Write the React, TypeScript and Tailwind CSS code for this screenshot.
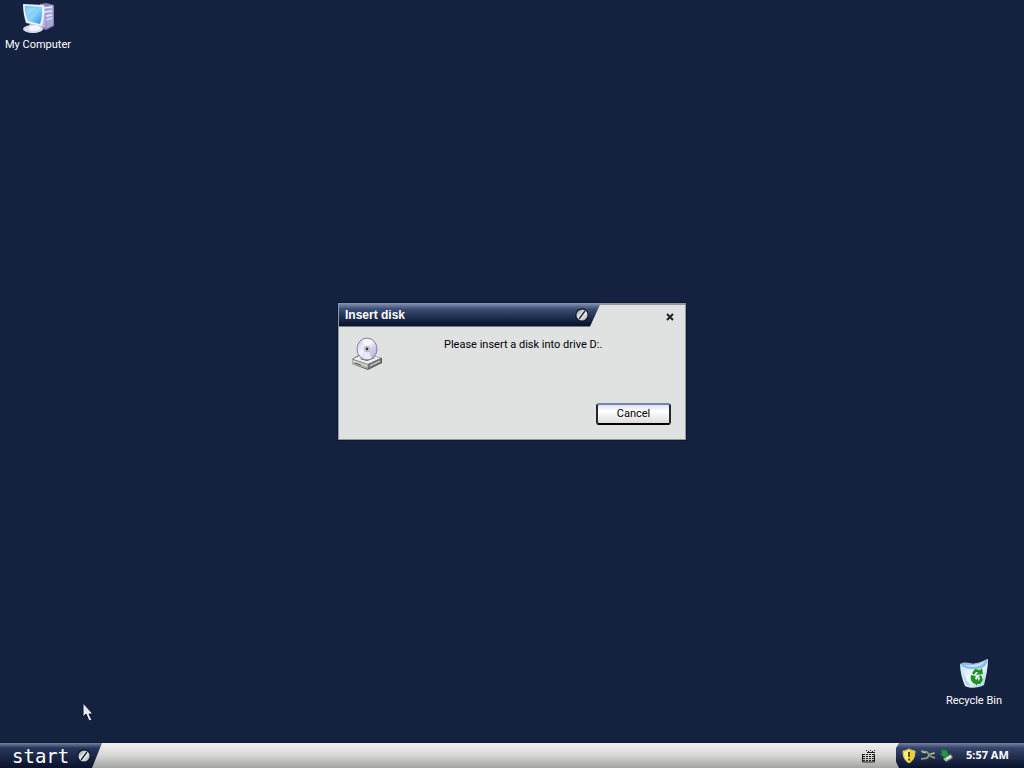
import type { ReactNode } from "react";

function Emblem() {
  return (
    <svg viewBox="0 0 14 14" className="size-3.5 shrink-0" aria-hidden="true">
      <defs>
        <linearGradient id="emblem" x1="0" y1="0" x2="1" y2="1">
          <stop offset="0" stopColor="#7c858c" />
          <stop offset="0.5" stopColor="#f4f6f6" />
          <stop offset="1" stopColor="#8f989f" />
        </linearGradient>
      </defs>
      <circle cx="7" cy="7" r="6.7" fill="#0b1226" />
      <circle cx="7" cy="7" r="5.6" fill="url(#emblem)" />
      <path d="M4 11 10 3" stroke="#141b2b" strokeWidth="1.3" />
    </svg>
  );
}

function ComputerIcon() {
  return (
    <svg viewBox="0 0 32 32" className="size-8" aria-hidden="true">
      <defs>
        <linearGradient id="screen" x1="0" y1="0" x2="1" y2="1">
          <stop offset="0" stopColor="#55b4f6" />
          <stop offset="0.5" stopColor="#8ed6fb" />
          <stop offset="1" stopColor="#2b8ce8" />
        </linearGradient>
        <linearGradient id="tower" x1="0" y1="0" x2="1" y2="0">
          <stop offset="0" stopColor="#e3e3f8" />
          <stop offset="1" stopColor="#9390c6" />
        </linearGradient>
      </defs>
      <path d="m18 2 6-1 8 2v21l-8 4-6-2Z" fill="#8582b9" />
      <path d="m18 3 7 1v22l-7-2Z" fill="url(#tower)" />
      <path d="m25 4 6-1v20l-6 3Z" fill="#aaa8d7" />
      <path d="m22 6 8-1m-8 5 8-1m-6 5 6-1m-6 5 6-2" stroke="#e9e8fb" strokeWidth="1.3" />
      <path d="m8 20 11 2 2 5c-3 4-12 5-17 1 0-3 4-3 4-8Z" fill="#b9bdde" />
      <ellipse cx="11" cy="27" rx="10" ry="4" fill="#d9dced" />
      <path d="m8 24 8-1 3 4-6 2-6-1Z" fill="#f4f5fd" />
      <path d="M1 2 22 3c1 7 0 15-2 21L4 21C2 15 1 8 1 2Z" fill="#e8edfa" />
      <path d="m3 4 17 1c0 6 0 12-2 17L6 19C4 13 3 9 3 4Z" fill="url(#screen)" />
      <path d="m4 5 10 1C11 9 7 12 5 14Z" fill="#fff" opacity=".25" />
    </svg>
  );
}

function RecycleIcon() {
  return (
    <svg viewBox="0 0 32 32" className="size-8" aria-hidden="true">
      <defs>
        <linearGradient id="bin" x1="0" y1="0" x2="1" y2="1">
          <stop offset="0" stopColor="#b5daf1" />
          <stop offset="0.5" stopColor="#f3fbff" />
          <stop offset="1" stopColor="#9dc8e7" />
        </linearGradient>
      </defs>
      <path d="M2 6c7 1 19 0 28-5 0 9-2 18-4 26-5 3-14 4-19 1C4 21 2 13 2 6Z" fill="url(#bin)" />
      <path d="M2 6c5-3 9-1 14 0C22 5 26 2 30 1c-1 6-4 9-9 10C14 12 6 11 2 6Z" fill="#8ebfe3" />
      <path d="M6 7c8 1 15 0 21-4-2 5-13 8-21 4Z" fill="#c9e7f6" />
      <path d="M4 11c1 6 2 11 4 16l5 1C10 25 6 18 4 11Z" fill="#80b4dc" opacity=".5" />
      <g fill="#1e941f">
        <path d="m14 15 3-4 5 1 2-2 1 6-7 1 2-3-2 0-2 3Z" />
        <path d="m13 17 5 1-1 2 1 2-1 4c-4-2-5-5-4-9Z" />
        <path d="m23 17 2 5-3 4h-3v2l-3-4 4-4v3l2-2-1-3Z" />
      </g>
    </svg>
  );
}

function DiskDriveIcon() {
  return (
    <svg viewBox="0 0 32 34" className="h-[34px] w-8 shrink-0" aria-hidden="true">
      <defs>
        <linearGradient id="disc" x1="0" y1="0" x2="1" y2="1">
          <stop offset="0" stopColor="#c6c5ed" />
          <stop offset="0.45" stopColor="#f5f4ff" />
          <stop offset="0.6" stopColor="#d8d0f2" />
          <stop offset="1" stopColor="#aaa9d2" />
        </linearGradient>
      </defs>
      <path d="m1 22 10-6 20 5v5l-14 7-16-6Z" fill="#595b59" />
      <path d="m2 22 10-5 18 4-13 6Z" fill="#ededeb" />
      <path d="m1 22 16 5v5L1 27Z" fill="#a9aba8" />
      <path d="m17 27 13-6v4l-13 7Z" fill="#747673" />
      <path d="m2 24 14 5m3 0 10-5" stroke="#eeeeeb" strokeWidth="1" />
      <path d="m4 26 6 2" stroke="#555" />
      <path d="m20 28 3-1" stroke="#a6b9a4" strokeWidth="1.5" />
      <path d="m9 22 7 2 8-3-7-2Z" fill="#555" />
      <ellipse cx="16" cy="12" rx="10" ry="11" fill="url(#disc)" stroke="#8482a1" strokeWidth="1" />
      <path d="m16 12-5-8c3-2 6-2 8-1Z" fill="#fff" opacity=".8" />
      <path d="m16 12 5 9c-3 2-7 1-9 0Z" fill="#fff" opacity=".6" />
      <circle cx="16" cy="12" r="3" fill="#dad9e6" stroke="#aaa8c3" strokeWidth=".7" />
      <circle cx="16" cy="12" r="1.4" fill="#35333c" />
    </svg>
  );
}

function KeyboardIcon() {
  return (
    <svg viewBox="0 0 14 14" className="size-3.5" fill="none" stroke="#1e1e1e" aria-hidden="true">
      <path d="M4 1.500h1m1 1h1m1-1h1m1 1h1m1-1h1" />
      <path d="M5 3.500h8" />
      <path d="M1 5.500h12M1 7.500h12M1 9.500h12M1 11.500h12" strokeDasharray="2 1" />
      <path d="M.5 5v8h12V5" />
    </svg>
  );
}

function ShieldIcon() {
  return (
    <svg viewBox="0 0 14 16" className="h-4 w-3.5" aria-hidden="true">
      <path d="M7 1c2 1 4 2 6 2 0 5-1 9-6 12C2 12 1 8 1 3c2 0 4-1 6-2Z" fill="#f0d02f" stroke="#d7c887" />
      <path d="M7 2v12c-3-2-5-5-5-10 2 0 3-1 5-2Z" fill="#fff27a" />
      <path d="M7 4v5m0 1.5v2" stroke="#4e3d0c" strokeWidth="1.8" />
    </svg>
  );
}

function CableIcon() {
  return (
    <svg viewBox="0 0 16 14" className="h-3.5 w-4" fill="none" aria-hidden="true">
      <path d="m1 3 6 1 3 3 5 2M2 10l6-1 2-4 5-1" stroke="#303f3b" strokeWidth="3" />
      <path d="m1 2 6 1 3 4 5 2M1 10l6-1 3-4 5-1" stroke="#93a18d" strokeWidth="1.5" />
      <path d="m2 3 4 1m5 1 3-1" stroke="#c8d1bd" />
    </svg>
  );
}

function DeviceIcon() {
  return (
    <svg viewBox="0 0 14 14" className="size-3.5" aria-hidden="true">
      <path d="m4 8 7-3 2 4-7 4-3-3Z" fill="#a6b2ae" stroke="#43504d" />
      <path d="m6 10 5-3" stroke="#edf1ec" strokeWidth="1.5" />
      <path d="M1 1h6l1 4h2L5 9 0 5l2-1Z" fill="#249744" stroke="#126a30" strokeWidth=".7" />
    </svg>
  );
}

function DesktopItem({ label, children }: { label: string; children: ReactNode }) {
  return (
    <button type="button" className="flex w-[76px] flex-col items-center gap-[3px] text-[11px] leading-4 whitespace-nowrap text-white">
      {children}
      <span>{label}</span>
    </button>
  );
}

function InsertDiskDialog() {
  return (
    <section
      role="dialog"
      aria-labelledby="dialog-title"
      className="flex w-[348px] flex-col border border-t-2 border-[#8f9a9d] bg-[#dfe2e1] text-black shadow-[0_0_0_1px_#0d1835]"
    >
      <header className="-mt-0.5 flex h-6 items-center justify-between pr-2.5">
        <div className="flex h-full w-[262px] items-center justify-between bg-linear-to-b from-[#8997b5] from-0% via-[#3d4e76] via-25% to-[#0b1530] to-90% pr-3 pl-1.5 [clip-path:polygon(0_0,100%_0,calc(100%-11px)_100%,0_100%)]">
          <h1 id="dialog-title" className="font-['Liberation_Sans',Arial,sans-serif] text-xs font-bold text-white">
            Insert disk
          </h1>
          <Emblem />
        </div>
        <button type="button" aria-label="Close" className="flex size-2.5 items-center justify-center pt-1">
          <svg viewBox="0 0 8 8" className="size-2 shrink-0" aria-hidden="true">
            <path d="m1 1 6 6m0-6L1 7" stroke="#20242a" strokeWidth="2" />
          </svg>
        </button>
      </header>
      <div className="flex items-start px-3 pt-2.5">
        <DiskDriveIcon />
        <p className="ml-[61px] text-[11px] leading-4">Please insert a disk into drive D:.</p>
      </div>
      <div className="flex justify-end px-3.5 pt-8 pb-3.5">
        <button
          type="button"
          className="h-[22px] w-[75px] rounded-[3px] border-2 border-t-[#7583a8] border-r-[#25282e] border-b-black border-l-[#25282e] bg-linear-to-b from-[#dfe3ef] via-white via-35% to-[#dcdddc] text-[11px] leading-4"
        >
          Cancel
        </button>
      </div>
    </section>
  );
}

function Taskbar() {
  return (
    <footer className="flex h-[26px] shrink-0 border-t border-[#101b38] bg-linear-to-b from-[#f2f2f1] from-0% via-[#d6d7d5] via-50% to-[#a2a4a2]">
      <button
        type="button"
        className="flex w-[102px] items-center gap-2 bg-linear-to-b from-[#77839f] from-0% via-[#27365c] via-20% to-[#0a132b] pl-3 text-white [clip-path:polygon(0_0,100%_0,calc(100%-10px)_100%,0_100%)]"
      >
        <span className="font-['DejaVu_Sans_Mono',monospace] text-[19px] leading-5">start</span>
        <Emblem />
      </button>
      <div className="flex flex-1 items-center justify-end pr-5">
        <button type="button" aria-label="Keyboard">
          <KeyboardIcon />
        </button>
      </div>
      <div className="flex w-32 items-center bg-linear-to-b from-[#77839f] from-0% via-[#35446d] via-20% to-[#0a132b] pl-1.5 [clip-path:polygon(3px_0,100%_0,100%_100%,3px_100%,0_75%,0_20%)]">
        <div className="flex items-center gap-1">
          <ShieldIcon />
          <CableIcon />
          <DeviceIcon />
        </div>
        <time className="ml-3 font-['Noto_Sans',sans-serif] text-[11px] font-bold whitespace-nowrap text-white">5:57 AM</time>
      </div>
    </footer>
  );
}

export default function App() {
  return (
    <div className="flex min-h-screen flex-col bg-[#14223f] font-[Roboto,Tahoma,sans-serif]">
      <main className="relative flex flex-1 items-center justify-center">
        <div className="absolute top-0.5 left-0">
          <DesktopItem label="My Computer">
            <ComputerIcon />
          </DesktopItem>
        </div>
        <InsertDiskDialog />
        <div className="absolute right-3 bottom-[33px]">
          <DesktopItem label="Recycle Bin">
            <RecycleIcon />
          </DesktopItem>
        </div>
        <svg viewBox="0 0 12 20" className="absolute bottom-5 left-[82px] h-5 w-3" aria-hidden="true">
          <path d="M1 1v14l3-3 3 7 3-1-3-6h4Z" fill="#e4e9f4" stroke="#0b132a" strokeWidth="1" />
        </svg>
      </main>
      <Taskbar />
    </div>
  );
}
